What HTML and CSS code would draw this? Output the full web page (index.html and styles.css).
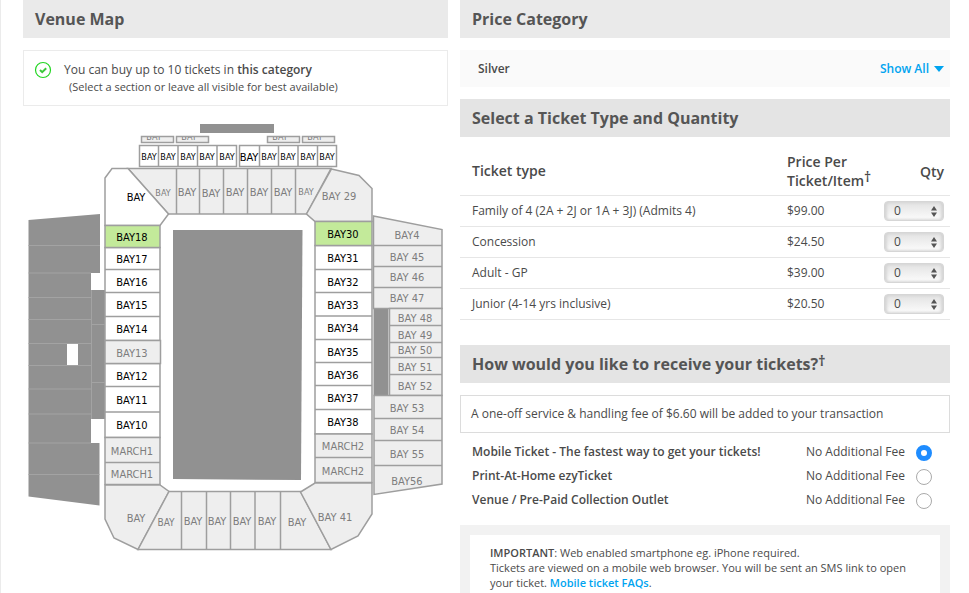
FILE: index.html
```html
<!DOCTYPE html>
<html lang="en">
<head>
    <meta charset="UTF-8">
    <meta name="viewport" content="width=device-width, initial-scale=1.0">
    <title>Select Tickets</title>
    <link rel="stylesheet" href="styles.css">
</head>
<body>
    <main class="page">
        <section class="venue">
            <h2 class="heading">Venue Map</h2>
            <div class="map-info">
                <svg class="tick" width="18" height="18" viewBox="0 0 18 18">
                    <circle cx="9" cy="9" r="7.5" fill="none" stroke="#22d622" stroke-width="1.2"/>
                    <path d="M6 9l2.2 2.2L12.2 7.2" fill="none" stroke="#3cc83c" stroke-width="2"/>
                </svg>
                <div>
                    <p>You can buy up to 10 tickets in <b>this category</b></p>
                    <p class="map-hint">(Select a section or leave all visible for best available)</p>
                </div>
            </div>
            <svg class="map" viewBox="23 106 425 454" role="img" aria-label="Venue seating map">
                <!-- stands and pitch -->
                <g class="solid">
                    <path d="M200 124h74v9h-74z"/>
                    <path d="M173 230h129.500L301 480l-128-1z"/>
                    <path d="M373.500 308.500h15v87h-15z"/>
                    <path d="M28.500 220L100 214v59h-9v17h14v129h-14v24h8.500v62.500l-71-9z"/>
                </g>
                <path class="seams" d="M28.500 245.500H100M28.500 273H91M28.500 297.500H91M28.500 319.500H91M28.500 343.500H91M28.500 365.500H91M28.500 389H91M28.500 414H91M28.500 443H91M28.500 474.500H99.500M91.500 290V419M92 324.500H105M92 382.500H105"/>
                <path fill="#fff" d="M67 344h11v21H67z"/>

                <!-- top boxes -->
                <g class="off">
                    <path d="M141.500 136.500h32v6h-32zM176.500 136.500h32v6h-32zM267.500 136.500h32v6h-32zM302.500 136.500h32v6h-32z"/>
                </g>
                <clipPath id="boxes"><path d="M141 137h195v6H141z"/></clipPath>
                <g class="off small" clip-path="url(#boxes)">
                    <text x="154" y="140">BAY</text>
                    <text x="189" y="140">BAY</text>
                    <text x="280" y="140">BAY</text>
                    <text x="315" y="140">BAY</text>
                </g>
                <g class="on small">
                    <path d="M139.500 145.500h97v21h-97zM158.500 145.500v21M178 145.500v21M197.500 145.500v21M217 145.500v21M239.500 145.500h97v21h-97zM259.500 145.500v21M278.500 145.500v21M298 145.500v21M317.500 145.500v21"/>
                    <text x="149" y="160">BAY</text>
                    <text x="168" y="160">BAY</text>
                    <text x="188" y="160">BAY</text>
                    <text x="207" y="160">BAY</text>
                    <text x="227" y="160">BAY</text>
                    <text class="large" x="249" y="161">BAY</text>
                    <text x="269" y="160">BAY</text>
                    <text x="288" y="160">BAY</text>
                    <text x="308" y="160">BAY</text>
                    <text x="327" y="160">BAY</text>
                </g>

                <!-- north end -->
                <g class="off">
                    <path d="M128 168.500h203L306.500 214h-138zM176.500 168.500v45.500M199.500 168.500v45.500M223.500 168.500v45.500M247.500 168.500v45.500M271.500 168.500v45.500M295.500 168.500v45.500"/>
                    <path d="M331.500 169L359 175.500l13 13v33h-57l-8.500-7.500z"/>
                    <text class="small" x="163" y="196">BAY</text>
                    <text x="187" y="196">BAY</text>
                    <text x="211" y="197">BAY</text>
                    <text x="235" y="196">BAY</text>
                    <text x="259" y="196">BAY</text>
                    <text x="283" y="196">BAY</text>
                    <text class="small" x="306" y="195">BAY</text>
                    <text x="339" y="200">BAY 29</text>
                </g>

                <!-- west side -->
                <g class="on">
                    <path d="M105 178l7-9.500h16l40.500 45.500-8.500 11.500h-55z"/>
                    <path d="M105 247.500h55v93h-55zM105 269.500h55M105 292.500h55M105 316.500h55M105 363.500h55v74h-55zM105 386.500h55M105 412h55"/>
                    <path class="picked" d="M105 225.500h55v22h-55z"/>
                    <text x="136" y="201">BAY</text>
                    <text x="132" y="241">BAY18</text>
                    <text x="132" y="263">BAY17</text>
                    <text x="132" y="286">BAY16</text>
                    <text x="132" y="309">BAY15</text>
                    <text x="132" y="333">BAY14</text>
                    <text x="132" y="380">BAY12</text>
                    <text x="132" y="404">BAY11</text>
                    <text x="132" y="429">BAY10</text>
                </g>
                <g class="off">
                    <path d="M105 340.500h55.500v23H105zM105 437.500h55v47h-55zM105 462.500h55"/>
                    <text x="132" y="357">BAY13</text>
                    <text x="132" y="455">MARCH1</text>
                    <text x="132" y="478">MARCH1</text>
                </g>

                <!-- east side -->
                <g class="on">
                    <path d="M315 245.500h57v188.500h-57zM315 269.500h57M315 292.500h57M315 316h57M315 339.500h57M315 362.500h57M315 385.500h57M315 409.500h57"/>
                    <path class="picked" d="M315 221.500h57v24h-57z"/>
                    <text x="343" y="238">BAY30</text>
                    <text x="343" y="262">BAY31</text>
                    <text x="343" y="286">BAY32</text>
                    <text x="343" y="309">BAY33</text>
                    <text x="343" y="332">BAY34</text>
                    <text x="343" y="356">BAY35</text>
                    <text x="343" y="379">BAY36</text>
                    <text x="343" y="402">BAY37</text>
                    <text x="343" y="426">BAY38</text>
                </g>
                <g class="off">
                    <path d="M315 434h57v48.500h-57zM315 457.500h57"/>
                    <path d="M373.500 216l68.500 13.500v79h-68.500zM373.500 245.500H442M373.500 266.500H442M373.500 287.500H442"/>
                    <path d="M389.500 308.500H442v87h-52.500zM389.500 325.500H442M389.500 342.500H442M389.500 357.500H442M389.500 374.500H442"/>
                    <path d="M374 395.500h68V484l-68 10.500zM374 418.500h68M374 440.500h68M374 465.500h68"/>
                    <text x="343" y="450">MARCH2</text>
                    <text x="343" y="475">MARCH2</text>
                    <text x="407" y="239">BAY4</text>
                    <text x="407" y="261">BAY 45</text>
                    <text x="407" y="281">BAY 46</text>
                    <text x="407" y="302">BAY 47</text>
                    <text x="415" y="322">BAY 48</text>
                    <text x="415" y="339">BAY 49</text>
                    <text x="415" y="354">BAY 50</text>
                    <text x="415" y="371">BAY 51</text>
                    <text x="415" y="390">BAY 52</text>
                    <text x="407" y="412">BAY 53</text>
                    <text x="407" y="434">BAY 54</text>
                    <text x="407" y="458">BAY 55</text>
                    <text x="407" y="485">BAY56</text>
                </g>

                <!-- south end -->
                <g class="off">
                    <path d="M105 485h55l9 6.500L138 549.500l-24-11.500-9-19z"/>
                    <path d="M169 491.500h131.500l30.500 58H138zM181.500 491.500v58M206.500 491.500v58M230.500 491.500v58M255 491.500v58M280.500 491.500v58"/>
                    <path d="M300.500 492l14.500-9h57v31l-14 22-27 13.500z"/>
                    <text x="136" y="522">BAY</text>
                    <text class="medium" x="166" y="526">BAY</text>
                    <text x="193" y="525">BAY</text>
                    <text x="217" y="525">BAY</text>
                    <text x="242" y="525">BAY</text>
                    <text x="267" y="525">BAY</text>
                    <text x="297" y="526">BAY</text>
                    <text x="335" y="521">BAY 41</text>
                </g>
            </svg>
        </section>

        <section class="order">
            <h2 class="heading">Price Category</h2>
            <div class="category">
                <span>Silver</span>
                <a class="show-all" href="#">Show All
                    <svg width="10" height="6" viewBox="0 0 10 6"><path d="M0 0h10L5 6z" fill="#00a4f0"/></svg>
                </a>
            </div>

            <h2 class="heading dark">Select a Ticket Type and Quantity</h2>
            <table class="tickets">
                <thead>
                    <tr>
                        <th>Ticket type</th>
                        <th class="price">Price Per Ticket/Item<span class="dagger">†</span></th>
                        <th class="qty">Qty</th>
                    </tr>
                </thead>
                <tbody>
                    <tr>
                        <td><label for="qty-family">Family of 4 (2A + 2J or 1A + 3J) (Admits 4)</label></td>
                        <td>$99.00</td>
                        <td class="qty">
                            <span class="picker">
                                <select id="qty-family"><option>0</option><option>1</option><option>2</option></select>
                                <svg width="6" height="11" viewBox="0 0 6 11"><path d="M0 4.500L3 0l3 4.500zM0 6.500h6L3 11z"/></svg>
                            </span>
                        </td>
                    </tr>
                    <tr>
                        <td><label for="qty-concession">Concession</label></td>
                        <td>$24.50</td>
                        <td class="qty">
                            <span class="picker">
                                <select id="qty-concession"><option>0</option><option>1</option><option>2</option></select>
                                <svg width="6" height="11" viewBox="0 0 6 11"><path d="M0 4.500L3 0l3 4.500zM0 6.500h6L3 11z"/></svg>
                            </span>
                        </td>
                    </tr>
                    <tr>
                        <td><label for="qty-adult">Adult - GP</label></td>
                        <td>$39.00</td>
                        <td class="qty">
                            <span class="picker">
                                <select id="qty-adult"><option>0</option><option>1</option><option>2</option></select>
                                <svg width="6" height="11" viewBox="0 0 6 11"><path d="M0 4.500L3 0l3 4.500zM0 6.500h6L3 11z"/></svg>
                            </span>
                        </td>
                    </tr>
                    <tr>
                        <td><label for="qty-junior">Junior (4-14 yrs inclusive)</label></td>
                        <td>$20.50</td>
                        <td class="qty">
                            <span class="picker">
                                <select id="qty-junior"><option>0</option><option>1</option><option>2</option></select>
                                <svg width="6" height="11" viewBox="0 0 6 11"><path d="M0 4.500L3 0l3 4.500zM0 6.500h6L3 11z"/></svg>
                            </span>
                        </td>
                    </tr>
                </tbody>
            </table>

            <h2 class="heading dark">How would you like to receive your tickets?<span class="dagger">†</span></h2>
            <p class="fee-note">A one-off service &amp; handling fee of $6.60 will be added to your transaction</p>
            <div class="delivery">
                <label class="option">
                    <b>Mobile Ticket - The fastest way to get your tickets!</b>
                    <span>No Additional Fee</span>
                    <input type="radio" name="delivery" checked>
                </label>
                <label class="option">
                    <b>Print-At-Home ezyTicket</b>
                    <span>No Additional Fee</span>
                    <input type="radio" name="delivery">
                </label>
                <label class="option">
                    <b>Venue / Pre-Paid Collection Outlet</b>
                    <span>No Additional Fee</span>
                    <input type="radio" name="delivery">
                </label>
            </div>
            <div class="notice">
                <p><b>IMPORTANT</b>: Web enabled smartphone eg. iPhone required.</p>
                <p>Tickets are viewed on a mobile web browser. You will be sent an SMS link to open your ticket. <a href="#">Mobile ticket FAQs</a>.</p>
            </div>
        </section>
    </main>
</body>
</html>
```

FILE: styles.css
```css
* {
    box-sizing: border-box;
}
body {
    margin: 0;
    font-family: "Open Sans", Arial, sans-serif;
    font-size: 12px;
    line-height: 18px;
    color: #4a4a4a;
    background: #fff;
}
p {
    margin: 0;
}
b {
    font-weight: 600;
}
a {
    color: #00a4f0;
    font-weight: 600;
    text-decoration: none;
}
.page {
    display: grid;
    grid-template-columns: 425fr 490fr;
    column-gap: 12px;
    min-height: 100vh;
    padding: 0 19px 0 22px;
    border-left: 1px solid #ebebeb;
}
.heading {
    margin: 0 0 12px;
    padding: 7px 12px;
    font-size: 16px;
    line-height: 24px;
    font-weight: 700;
    color: #555;
    background: #eaeaea;
}
.heading.dark {
    background: #e4e4e4;
}
.dagger {
    font-size: 14px;
    line-height: 0;
    vertical-align: 4px;
}

/* venue map */
.map-info {
    display: flex;
    gap: 12px;
    height: 56px;
    padding: 10px;
    border: 1px solid #ebebeb;
}
.map-hint {
    padding-left: 5px;
    font-size: 11px;
    line-height: 16px;
}
.map {
    display: block;
    width: 100%;
    font-family: "DejaVu Sans Condensed", "Open Sans", sans-serif;
    font-size: 11px;
}
.map text {
    stroke: none;
    text-anchor: middle;
}
.solid {
    fill: #919191;
}
.seams {
    fill: none;
    stroke: #a3a3a3;
}
.off path,
.on path {
    fill: #eee;
    stroke: #9e9e9e;
    stroke-width: 1.5px;
}
.off text {
    fill: #7d7d7d;
}
.on path {
    fill: #fff;
}
.on text {
    fill: #000;
}
.on .picked {
    fill: #c3ea9a;
}
.small {
    font-size: 9px;
}
.medium {
    font-size: 10px;
}
.large {
    font-size: 11px;
}

/* order form */
.order {
    display: flex;
    flex-direction: column;
}
.category {
    display: flex;
    justify-content: space-between;
    align-items: center;
    height: 37px;
    margin-bottom: 12px;
    padding: 0 6px 0 18px;
    font-weight: 600;
    background: #fafafa;
}
.show-all {
    display: flex;
    align-items: center;
    gap: 5px;
}
.tickets {
    width: 100%;
    margin-bottom: 25px;
    border-collapse: collapse;
    table-layout: fixed;
}
.tickets th {
    height: 46px;
    padding: 0 0 2px 12px;
    font-size: 14px;
    line-height: 19px;
    font-weight: 600;
    text-align: left;
    border-bottom: 1px solid #e6e6e6;
}
.tickets td {
    height: 31px;
    padding: 0 0 0 12px;
    border-bottom: 1px solid #e6e6e6;
}
.tickets .price {
    width: 108px;
}
.tickets .qty {
    width: 67px;
    padding: 0 6px 0 0;
    text-align: right;
}
.picker {
    display: inline-block;
    position: relative;
    vertical-align: middle;
}
.picker select {
    display: block;
    appearance: none;
    width: 60px;
    height: 20px;
    padding: 0 0 0 9px;
    font-family: inherit;
    font-size: 12px;
    color: #4a4a4a;
    border: 1px solid #d6d6d6;
    border-radius: 4px;
    background: linear-gradient(#e2e2e2, #fcfcfc);
    box-shadow: inset 2px 0 3px #d4d4d4, inset -2px 0 3px #d4d4d4;
}
.picker svg {
    position: absolute;
    top: 5px;
    right: 7px;
    fill: #555;
    pointer-events: none;
}
.fee-note {
    padding: 9px 10px;
    border: 1px solid #dcdcdc;
}
.delivery {
    padding: 7px 18px 13px 12px;
}
.option {
    display: flex;
    align-items: center;
    height: 24px;
}
.option b {
    flex: 1;
}
.option input {
    appearance: none;
    width: 16px;
    height: 16px;
    margin: 2px 0 0 11px;
    border: 1px solid #aaa;
    border-radius: 50%;
}
.option input:checked {
    border: 5px solid #1e8cff;
}
.notice {
    flex: 1;
    padding: 10px 20px 0;
    font-size: 11px;
    line-height: 15px;
    border: 10px solid #f2f2f2;
    border-bottom: 0;
}
```
